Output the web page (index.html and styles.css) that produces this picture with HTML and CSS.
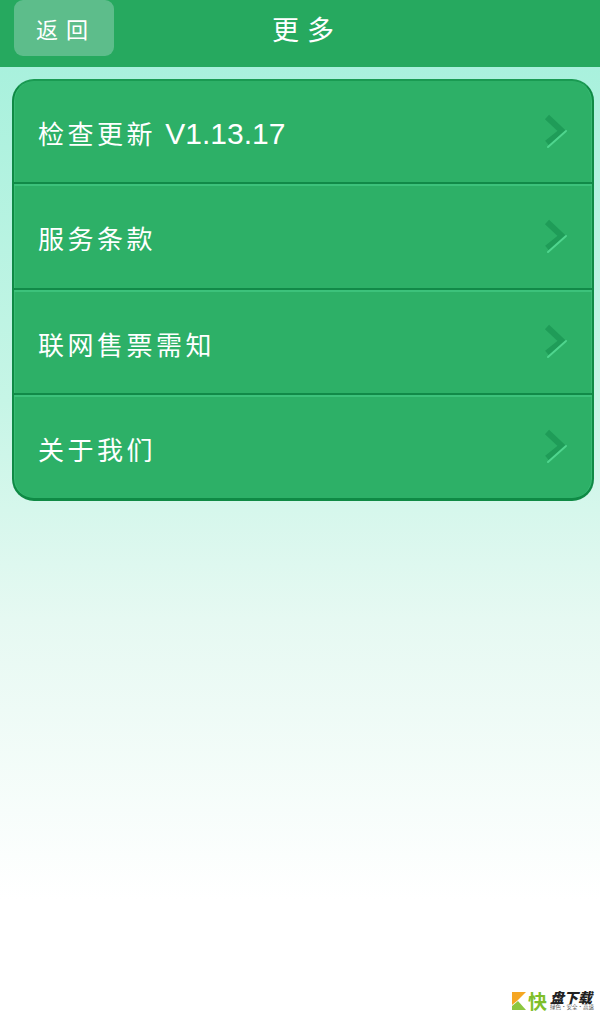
FILE: index.html
```html
<!DOCTYPE html>
<html lang="zh-CN">
<head>
<meta charset="utf-8">
<title>更多</title>
<link rel="stylesheet" href="styles.css">
</head>
<body>
<header class="topbar">
  <button class="back">返回</button>
  <h1 class="title">更多</h1>
</header>
<main class="content">
  <ul class="menu">
    <li class="row"><span class="label">检查更新 <span class="ver">V1.13.17</span></span>
      <svg class="chev" viewBox="0 0 24 36"><path class="chev-main" d="M3 3 L18 17 L3 29"/><path class="chev-hi" d="M4 33 L22 17"/></svg></li>
    <li class="row"><span class="label">服务条款</span>
      <svg class="chev" viewBox="0 0 24 36"><path class="chev-main" d="M3 3 L18 17 L3 29"/><path class="chev-hi" d="M4 33 L22 17"/></svg></li>
    <li class="row"><span class="label">联网售票需知</span>
      <svg class="chev" viewBox="0 0 24 36"><path class="chev-main" d="M3 3 L18 17 L3 29"/><path class="chev-hi" d="M4 33 L22 17"/></svg></li>
    <li class="row"><span class="label">关于我们</span>
      <svg class="chev" viewBox="0 0 24 36"><path class="chev-main" d="M3 3 L18 17 L3 29"/><path class="chev-hi" d="M4 33 L22 17"/></svg></li>
  </ul>
</main>
<div class="wm">
  <svg class="wm-k" viewBox="0 0 14 18"><path fill="#f5a623" d="M0 0H14L5 9 0 13Z"/><path fill="#8cc63f" d="M0 18V14L6 9 14 18Z"/></svg>
  <span class="wm-kuai">快</span>
  <span class="wm-txt"><span class="wm-name">盘下载</span><span class="wm-sub">绿色·安全·高速</span></span>
</div>
</body>
</html>
```

FILE: styles.css
```css
* { box-sizing: border-box; }
html, body { height: 100%; }
body {
  margin: 0;
  width: 600px;
  height: 1018px;
  overflow: hidden;
  position: relative;
  font-family: "Noto Sans CJK SC", "Liberation Sans", sans-serif;
  background: linear-gradient(180deg, #a9f1dd 67px, #c6f5e6 400px, #e6f9f2 620px, #ffffff 900px);
  color: #fff;
}
.topbar {
  height: 67px;
  background: #26a95f;
  display: flex;
  align-items: flex-start;
  position: relative;
}
.back {
  margin: 0 0 0 14px;
  width: 100px;
  height: 56px;
  border: 0;
  border-radius: 9px;
  background: #5dbd8b;
  color: #fff;
  font: 400 22px/55px "Noto Sans CJK SC", sans-serif;
  letter-spacing: 8px;
  padding: 0 0 0 4px;
}
.title {
  position: absolute;
  left: 272px;
  top: 8px;
  margin: 0;
  font-size: 27px;
  line-height: 42px;
  font-weight: 400;
  letter-spacing: 8px;
}
.content { padding: 12px 6px 0 12px; }
.menu {
  list-style: none;
  margin: 0;
  padding: 0;
  height: 422px;
  background: #2db067;
  border: 2px solid #0f8a45;
  border-top-color: #1a9a52;
  border-bottom-width: 3px;
  border-radius: 22px;
  box-shadow: inset 1px 0 0 #38bb74, inset -1px 0 0 #38bb74;
  display: grid;
  grid-template-rows: 103px 106px 105px 103px;
  overflow: hidden;
}
.row {
  display: flex;
  align-items: center;
  justify-content: space-between;
  padding: 4px 24px 0 24px;
  border-bottom: 2px solid #118a48;
  box-shadow: inset 0 2px 0 #3cc27b;
}
.row:first-child { box-shadow: none; }
.row:last-child { border-bottom: 0; }
.label {
  font-size: 26px;
  line-height: 36px;
  letter-spacing: 3.5px;
  white-space: nowrap;
}
.ver {
  font-family: "Liberation Sans", sans-serif;
  font-size: 30px;
  letter-spacing: 0;
}
.chev { width: 24px; height: 36px; flex: none; margin-top: -3px; fill: none; }
.chev-main { stroke: #1f9c58; stroke-width: 6; stroke-linecap: butt; }
.chev-hi { stroke: #4fd58e; stroke-width: 2; stroke-linecap: round; }
.wm {
  position: absolute;
  left: 512px;
  top: 991px;
  display: flex;
  align-items: center;
  gap: 0;
  height: 20px;
}
.wm-k { width: 14px; height: 18px; }
.wm-kuai { color: #7fbf2a; font-size: 19px; line-height: 20px; font-weight: 700; margin-left: 2px; }
.wm-txt { display: flex; flex-direction: column; margin-left: 3px; color: #222; }
.wm-name { font-size: 14px; line-height: 13px; height: 13px; font-weight: 900; font-style: italic; white-space: nowrap; }
.wm-sub { font-size: 5.5px; line-height: 7px; color: #555; white-space: nowrap; }
```
